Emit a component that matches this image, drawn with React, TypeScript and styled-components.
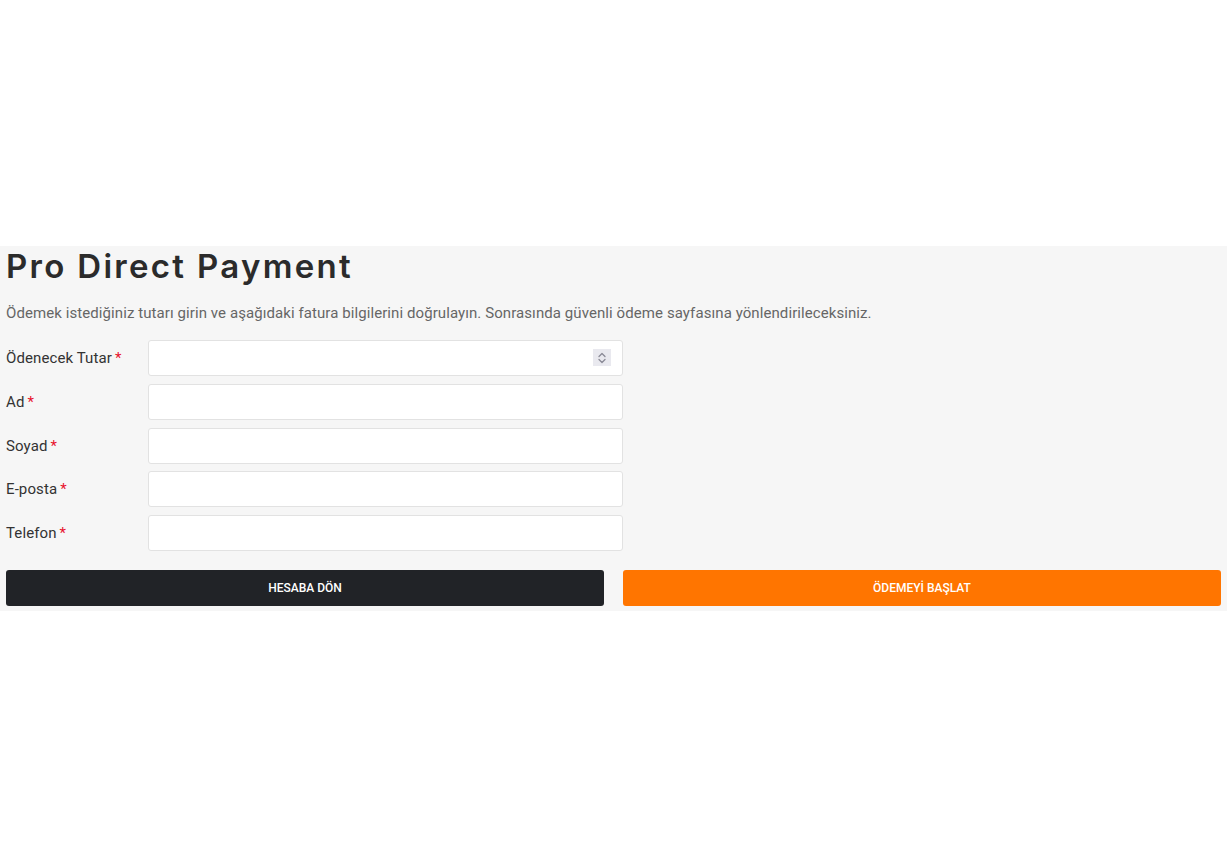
import React from 'react';
import styled, { createGlobalStyle } from 'styled-components';

const GlobalStyle = createGlobalStyle`
  html, body {
    margin: 0;
    padding: 0;
    background: #ffffff;
  }
  * {
    box-sizing: border-box;
  }
`;

interface Field {
  id: string;
  label: string;
  type: string;
  spinner?: boolean;
}

const fields: Field[] = [
  { id: 'amount', label: 'Ödenecek Tutar', type: 'text', spinner: true },
  { id: 'firstName', label: 'Ad', type: 'text' },
  { id: 'lastName', label: 'Soyad', type: 'text' },
  { id: 'email', label: 'E-posta', type: 'email' },
  { id: 'phone', label: 'Telefon', type: 'tel' },
];

export default function App() {
  return (
    <Page>
      <GlobalStyle />
      <Panel>
        <Title>Pro Direct Payment</Title>
        <Intro>
          Ödemek istediğiniz tutarı girin ve aşağıdaki fatura bilgilerini doğrulayın. Sonrasında güvenli
          ödeme sayfasına yönlendirileceksiniz.
        </Intro>

        <Form>
          {fields.map((f) => (
            <Row key={f.id}>
              <Label htmlFor={f.id}>
                {f.label}
                <Required>*</Required>
              </Label>
              <InputWrap>
                <Input id={f.id} type={f.type} />
                {f.spinner && (
                  <Spinner>
                    <svg width="10" height="14" viewBox="0 0 10 14" fill="none">
                      <path d="M2 5.5 L5 2.5 L8 5.5" stroke="#8a8a96" strokeWidth="1.3" strokeLinecap="round" strokeLinejoin="round" />
                      <path d="M2 8.5 L5 11.5 L8 8.5" stroke="#8a8a96" strokeWidth="1.3" strokeLinecap="round" strokeLinejoin="round" />
                    </svg>
                  </Spinner>
                )}
              </InputWrap>
            </Row>
          ))}
        </Form>

        <Actions>
          <ActionButton $variant="dark">HESABA DÖN</ActionButton>
          <ActionButton $variant="orange">ÖDEMEYİ BAŞLAT</ActionButton>
        </Actions>
      </Panel>
    </Page>
  );
}

const Page = styled.div`
  min-height: 100vh;
  display: flex;
  flex-direction: column;
  justify-content: center;
`;

const Panel = styled.section`
  background: #f6f6f6;
  padding: 0 6px 5px;
`;

const Title = styled.h1`
  margin: 0;
  font-family: 'Inter', 'Open Sans', sans-serif;
  font-weight: 600;
  font-size: 33px;
  line-height: 40px;
  color: #2b2b2b;
  letter-spacing: 2.3px;
`;

const Intro = styled.p`
  margin: 16px 0 16px;
  font-family: 'Roboto', 'Liberation Sans', sans-serif;
  font-size: 15px;
  line-height: 22px;
  letter-spacing: 0.08px;
  color: #666666;
`;

const Form = styled.div`
  display: flex;
  flex-direction: column;
  gap: 7.75px;
`;

const Row = styled.div`
  display: grid;
  grid-template-columns: 142px 475px;
  align-items: center;
`;

const Label = styled.label`
  font-family: 'Roboto', 'Liberation Sans', sans-serif;
  font-size: 15px;
  letter-spacing: 0.1px;
  color: #333333;
`;

const Required = styled.span`
  color: #e8112d;
  margin-left: 3px;
`;

const InputWrap = styled.div`
  position: relative;
`;

const Input = styled.input`
  display: block;
  width: 100%;
  height: 36px;
  border: 1px solid #e2e2e2;
  border-radius: 3px;
  background: #ffffff;
  padding: 0 10px;
  font-family: 'Roboto', 'Liberation Sans', sans-serif;
  font-size: 15px;
  outline: none;
`;

const Spinner = styled.span`
  position: absolute;
  right: 12px;
  top: 9px;
  width: 18px;
  height: 17px;
  background: #e9e9ef;
  display: flex;
  align-items: center;
  justify-content: center;
`;

const Actions = styled.div`
  display: grid;
  grid-template-columns: 1fr 1fr;
  gap: 19px;
  margin-top: 19px;
`;

const ActionButton = styled.button<{ $variant: 'dark' | 'orange' }>`
  height: 36px;
  border: none;
  border-radius: 3px;
  background: ${(p) => (p.$variant === 'dark' ? '#212327' : '#ff7500')};
  color: #ffffff;
  font-family: 'Roboto', 'Liberation Sans', sans-serif;
  font-weight: 500;
  font-size: 12px;
  cursor: pointer;
`;
